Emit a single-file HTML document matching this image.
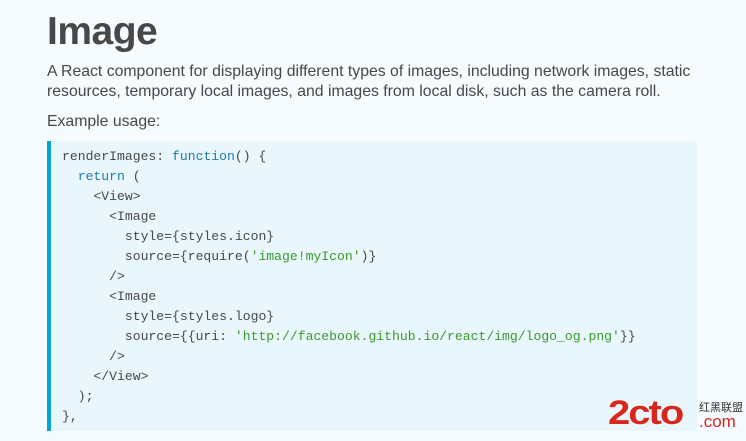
<!DOCTYPE html>
<html><head><meta charset="utf-8"><style>
html,body{margin:0;padding:0;width:746px;height:441px;overflow:hidden;background:#f5fbfe;}
body{font-family:"Liberation Sans",sans-serif;color:#484848;position:relative;}
h1{position:absolute;left:47px;top:8px;margin:0;font-size:39px;font-weight:bold;color:#484848;letter-spacing:-0.5px;line-height:48px;}
p{position:absolute;left:47px;margin:0;font-size:15.8px;line-height:20px;}
.code{position:absolute;left:47px;top:141px;width:646px;height:290px;background:#e9f6fb;border-left:4px solid #05a5d1;}
pre{margin:0;position:absolute;left:11px;top:6px;font-family:"Liberation Mono",monospace;font-size:13.1px;line-height:20px;color:#484848;}
.k{color:#1f7aa8}.s{color:#3a9a2a}
.wm{position:absolute;left:608px;top:390px;}
</style></head><body>
<h1>Image</h1>
<p style="top:62px;width:690px">A React component for displaying different types of images, including network images, static resources, temporary local images, and images from local disk, such as the camera roll.</p>
<p style="top:112px">Example usage:</p>
<div class="code"><pre>renderImages: <span class="k">function</span>() {
  <span class="k">return</span> (
    &lt;View&gt;
      &lt;Image
        style={styles.icon}
        source={require(<span class="s">'image!myIcon'</span>)}
      /&gt;
      &lt;Image
        style={styles.logo}
        source={{uri: <span class="s">'http://facebook.github.io/react/img/logo_og.png'</span>}}
      /&gt;
    &lt;/View&gt;
  );
},</pre></div>
<div class="wm">
<span style="position:absolute;left:0;top:0;font:bold 40px/40px 'Liberation Sans',sans-serif;color:#d8281e;letter-spacing:-2px;transform:scaleY(0.85);transform-origin:0 100%;display:block;">2cto</span>
<span style="position:absolute;left:91px;top:23px;font:17px/17px 'Liberation Sans',sans-serif;color:#d8281e;">.com</span>
<span style="position:absolute;left:91px;top:11px;font:11px/12px 'Noto Sans CJK SC',sans-serif;color:#333;white-space:nowrap;">红黑联盟</span>
</div>
</body></html>
